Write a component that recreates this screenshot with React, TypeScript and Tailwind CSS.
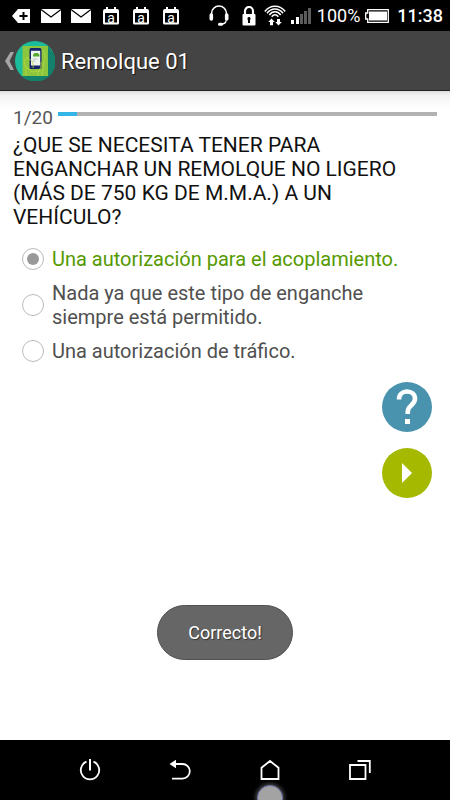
import React, { useState } from 'react';

interface Option {
  id: string;
  text: string;
  correct: boolean;
}

const QUESTION = '¿QUE SE NECESITA TENER PARA ENGANCHAR UN REMOLQUE NO LIGERO (MÁS DE 750 KG DE M.M.A.) A UN VEHÍCULO?';

const OPTIONS: Option[] = [
  { id: 'a', text: 'Una autorización para el acoplamiento.', correct: true },
  { id: 'b', text: 'Nada ya que este tipo de enganche siempre está permitido.', correct: false },
  { id: 'c', text: 'Una autorización de tráfico.', correct: false },
];

const MailIcon = () => (
  <svg width="20" height="14" viewBox="0 0 20 14">
    <path d="M0 0h20v14H0z" fill="#fff" />
    <path d="M0 .5l10 7.500L20 .5" fill="none" stroke="#000" strokeWidth="1.200" />
  </svg>
);

const CalendarIcon = () => (
  <span className="relative flex h-[18px] w-4 items-end justify-center">
    <svg className="absolute inset-0" width="16" height="18" viewBox="0 0 16 18">
      <path d="M2 2h1V0h2v2h6V0h2v2h1a2 2 0 0 1 2 2v12a1.500 1.500 0 0 1-1.500 1.500h-13A1.500 1.500 0 0 1 0 16V4a2 2 0 0 1 2-2z" fill="#fff" />
      <path d="M2 6h12v9.500H2z" fill="#000" />
    </svg>
    <span className="relative text-[14px] leading-[14px]">a</span>
  </span>
);

const HeadsetIcon = () => (
  <svg width="20" height="22" viewBox="0 0 20 22" fill="none" stroke="#fff">
    <path d="M2.500 10V8.500a7.500 7.500 0 0 1 15 0V10" strokeWidth="1.600" />
    <path d="M2.300 10v4M17.700 10v4" strokeWidth="3.600" strokeLinecap="round" />
    <path d="M17 15.500c0 2.500-2 3.500-5 3.500" strokeWidth="1.400" />
    <path d="M10.500 19.200h2" strokeWidth="3" strokeLinecap="round" />
  </svg>
);

const LockIcon = () => (
  <svg width="14" height="20" viewBox="0 0 14 20">
    <path d="M3 9V5a4 4 0 0 1 8 0v4" fill="none" stroke="#fff" strokeWidth="2.200" />
    <rect x=".5" y="8" width="13" height="11.500" rx="1" fill="#fff" />
    <path d="M7 11a1.700 1.700 0 0 1 1 3v3H6v-3a1.700 1.700 0 0 1 1-3z" fill="#000" />
  </svg>
);

const WifiIcon = () => (
  <svg width="22" height="21" viewBox="0 0 22 21" fill="none" stroke="#fff" strokeWidth="1.500">
    <path d="M.8 6.500C6-.6 16-.6 21.200 6.500M3 8.200c4.200-5.700 11.800-5.700 16 0M5.300 10c3-4.200 8.400-4.200 11.400 0M7.700 11.800c2-2.600 4.600-2.600 6.600 0" />
    <path d="M7.500 13.500l3.300 3.500H9v3.300H6V17H4.200zM14.500 20.500L11.200 17H13v-3h3v3h1.800z" fill="#fff" stroke="none" />
  </svg>
);

const SignalIcon = () => (
  <svg width="20" height="16" viewBox="0 0 20 16">
    <path d="M0 12h3v4H0zM5 9h3v7H5z" fill="#fff" />
    <path d="M9 6h3v10H9zM13 3h3v13h-3zM17 0h3v16h-3z" fill="#5c5c5c" />
  </svg>
);

const BatteryIcon = () => (
  <svg width="24" height="14" viewBox="0 0 24 14">
    <path d="M2.700.7h20.600v12.600H2.700V10H.7V4h2z" fill="none" stroke="#fff" strokeWidth="1.300" />
    <path d="M4 2.500h18v9H4z" fill="#fff" />
  </svg>
);

const AppLogo = () => (
  <svg width="40" height="40" viewBox="0 0 40 40">
    <circle cx="20" cy="20" r="20" fill="#1bbc9b" />
    <path d="M33 5l6 8a20 20 0 0 1-30 24l-2-2h26z" fill="#12806a" />
    <path d="M7.500 5H33v30H7.500z" fill="#8cc63f" />
    <path d="M11 35v-8l-2-7 3-4 3 3M26 8c4 3 5 8 3 12l-2 15M11 26l6 5 8-1" fill="none" stroke="#b9d83c" strokeWidth=".8" />
    <rect x="14.500" y="7" width="12" height="21" rx="1.500" fill="#17256b" />
    <path d="M16 9.800h9.200v14.700H16z" fill="#eef4ee" />
    <path d="M18 14l1.500-2h3.500l1.500 2v1.500H18z" fill="#55aa2c" />
    <path d="M17.500 18h5M17.500 20h3" stroke="#aab6b0" strokeWidth=".7" />
    <path d="M13 18c4 1 6 4 5 9M23 35c-1-5 4-7 3-14" fill="none" stroke="#b9d83c" strokeWidth=".8" />
  </svg>
);

const StatusBar = () => (
  <div className="flex h-[31px] items-center justify-between bg-black pr-[7px] pl-3 text-white">
    <div className="flex items-center">
      <svg width="18" height="14" viewBox="0 0 18 14">
        <path d="M0 7l6-7h12v14H6z" fill="#fff" />
        <path d="M7.500 7h8M11.500 3v8" stroke="#000" strokeWidth="2" />
      </svg>
      <div className="ml-[11px] flex items-center gap-[10px]">
        <MailIcon />
        <MailIcon />
      </div>
      <div className="ml-3 flex items-center gap-[14px]">
        <CalendarIcon />
        <CalendarIcon />
        <CalendarIcon />
      </div>
    </div>
    <div className="flex items-center">
      <HeadsetIcon />
      <span className="ml-[13px]"><LockIcon /></span>
      <span className="ml-2"><WifiIcon /></span>
      <span className="ml-[5px]"><SignalIcon /></span>
      <span className="ml-[6px] text-[18px] leading-[20px]">100%</span>
      <span className="ml-[5px]"><BatteryIcon /></span>
      <span className="ml-2 text-[18px] leading-[20px] font-medium">11:38</span>
    </div>
  </div>
);

const Header = () => (
  <header className="flex h-[60px] items-center border-b border-[#222] bg-[#444] pt-px pl-[5px] text-white">
    <button aria-label="Volver" className="flex items-center">
      <svg width="10" height="20" viewBox="0 0 10 20">
        <path d="M5.500 1H9L4.500 10 9 19H5.500L0 10z" fill="#a5a5a5" />
      </svg>
      <AppLogo />
    </button>
    <h1 className="ml-[6px] pt-[2px] text-[22px] leading-[28px] [text-shadow:1px_1px_1px_#111]">Remolque 01</h1>
  </header>
);

const NavBar = () => (
  <nav className="relative grid h-[60px] grid-cols-4 items-center justify-items-center overflow-hidden bg-black px-[45px]">
    <button aria-label="Apagar">
      <svg width="22" height="22" viewBox="0 0 22 22" fill="none" stroke="#fff" strokeWidth="1.800">
        <path d="M7.500 2.600a9.200 9.200 0 1 0 7 0" />
        <path d="M11 0v11.500" strokeWidth="2" />
      </svg>
    </button>
    <button aria-label="Atrás">
      <svg width="22" height="22" viewBox="0 0 22 22" fill="none" stroke="#fff" strokeWidth="1.800">
        <path d="M5 5h8.500a7.300 7.300 0 0 1 0 14.600H3" />
        <path d="M.5 5L7 .8v8.400z" fill="#fff" stroke="none" />
      </svg>
    </button>
    <button aria-label="Inicio">
      <svg width="22" height="22" viewBox="0 0 22 22" fill="none" stroke="#fff" strokeWidth="1.800">
        <path d="M2.500 8.800L11 2l8.500 6.800V20h-17z" />
      </svg>
    </button>
    <button aria-label="Recientes">
      <svg width="22" height="22" viewBox="0 0 22 22" fill="none" stroke="#fff" strokeWidth="1.800">
        <path d="M1 6h15.500v14H1z" />
        <path d="M8.500 2h12.300v12" />
      </svg>
    </button>
    <span className="absolute top-[45px] left-[60%] size-[26px] -translate-x-1/2 rounded-full border border-[#6670a8] bg-[#a3a3a3] shadow-[0_0_4px_1px_#555]" />
  </nav>
);

const App: React.FC = () => {
  const [selected, setSelected] = useState('a');

  return (
    <div className="flex min-h-screen flex-col bg-white font-[Roboto,sans-serif]">
      <StatusBar />
      <Header />
      <main className="flex flex-1 flex-col bg-[linear-gradient(#dcdcdc,#f2f2f2_4px,#fff_18px)] px-[13px] pt-[13px]">
        <div className="flex items-start gap-[5px]">
          <span id="progress-label" className="text-[19px] leading-[28px] text-[#555]">1/20</span>
          <div
            role="progressbar"
            aria-labelledby="progress-label"
            aria-valuenow={1}
            aria-valuemax={20}
            className="mt-2 h-1 flex-1 bg-[#b2b2b2]"
          >
            <div className="h-full bg-[#33b5e5]" style={{ width: `${(1 / 20) * 100}%` }} />
          </div>
        </div>

        <fieldset className="pt-px">
          <legend className="pt-px text-[21px] leading-[24px] text-[#111]">{QUESTION}</legend>
          <div className="mt-[17px] flex flex-col gap-[10px] pl-[9px]">
            {OPTIONS.map(opt => (
              <label
                key={opt.id}
                className={`flex items-center gap-2 text-[20px] leading-[24px] ${opt.correct && selected === opt.id ? 'text-[#559900]' : 'text-[#505050]'}`}
              >
                <input
                  type="radio"
                  name="respuesta"
                  checked={selected === opt.id}
                  onChange={() => setSelected(opt.id)}
                  className="grid size-[22px] shrink-0 appearance-none place-content-center rounded-full border border-[#bbb] bg-white before:size-3 before:rounded-full checked:before:bg-[#999]"
                />
                <span className="max-w-[350px]">{opt.text}</span>
              </label>
            ))}
          </div>
        </fieldset>

        <div className="mt-[19px] mr-[5px] flex flex-col items-end gap-4">
          <button aria-label="Ayuda" className="flex size-[50px] items-center justify-center rounded-full bg-[#4a93ae]">
            <svg width="22" height="36" viewBox="0 0 22 36">
              <path d="M3 10.500C3 5.500 6.500 2.500 11 2.500s8 3 8 7.300c0 3.200-1.800 4.700-4 6.800-2.500 2.400-3.300 3.400-3.300 8.400" fill="none" stroke="#fff" strokeWidth="4.600" />
              <path d="M9 30h5v5H9z" fill="#fff" />
            </svg>
          </button>
          <button aria-label="Siguiente" className="flex size-[50px] items-center justify-center rounded-full bg-[#a4b900]">
            <svg width="12" height="20" viewBox="0 0 12 20">
              <path d="M1 0l10 10L1 20z" fill="#fff" />
            </svg>
          </button>
        </div>

        <div
          role="status"
          className="mt-auto mb-20 flex h-[55px] w-[136px] items-center justify-center self-center rounded-full border border-[#505050] bg-[#666] text-[18px] leading-[24px] text-white [text-shadow:1px_1px_1px_#333]"
        >
          Correcto!
        </div>
      </main>
      <NavBar />
    </div>
  );
};

export default App;
